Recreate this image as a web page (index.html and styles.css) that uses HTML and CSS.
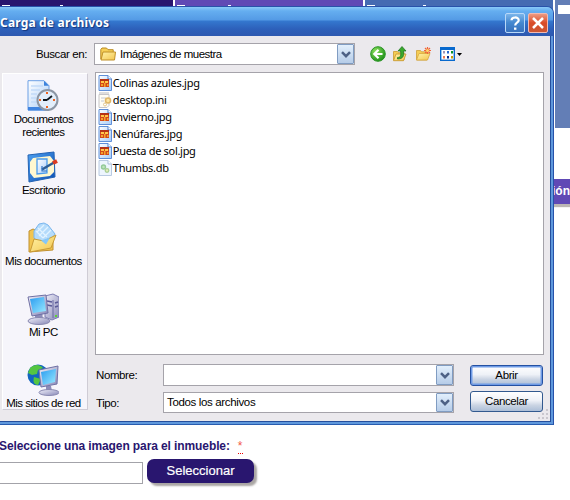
FILE: index.html
```html
<!DOCTYPE html>
<html lang="es">
<head>
<meta charset="utf-8">
<title>Carga de archivos</title>
<link rel="stylesheet" href="styles.css">
</head>
<body>
<svg class="defs" width="0" height="0" aria-hidden="true">
  <defs>
    <linearGradient id="gold" x1="0" y1="0" x2="1" y2="1"><stop offset="0" stop-color="#fff3a8"/><stop offset="1" stop-color="#f3c650"/></linearGradient>
    <linearGradient id="screen" x1="0" y1="0" x2="1" y2="1"><stop offset="0" stop-color="#2a9cf0"/><stop offset="1" stop-color="#9aeaff"/></linearGradient>
    <linearGradient id="paper" x1="0" y1="0" x2="1" y2="1"><stop offset="0" stop-color="#fff"/><stop offset="1" stop-color="#a9cdf8"/></linearGradient>
    <linearGradient id="metal" x1="0" y1="0" x2="1" y2="1"><stop offset="0" stop-color="#f0f0fa"/><stop offset="1" stop-color="#8686b6"/></linearGradient>
    <linearGradient id="blue" x1="0" y1="0" x2="1" y2="1"><stop offset="0" stop-color="#4da0f0"/><stop offset="1" stop-color="#0c4fb4"/></linearGradient>
    <radialGradient id="green" cx=".35" cy=".3" r=".8"><stop offset="0" stop-color="#8be05c"/><stop offset="1" stop-color="#168a14"/></radialGradient>
    <symbol id="image-file" viewBox="0 0 14 16">
      <path d="M1 .5h9l3.500 3.500v11.500H1z" fill="url(#paper)" stroke="#5f8fd8"/>
      <path d="M10 .5V4h3.500" fill="#fff" stroke="#4c7fd0"/>
      <path d="M2 4h9v8H2z" fill="#d2481c"/><path d="M2 4h9v2H2z" fill="#b53216"/><path d="M3 6h3v2H3zM7 6h3v2H7z" fill="#ffc94a"/><path d="M3 9h2v2H3zM6 8h1.500v4H6zM9 9h1.500v2H9z" fill="#f4a52c"/>
    </symbol>
    <symbol id="chevron" viewBox="0 0 10 7"><path d="M1 1.200l4 4 4-4" fill="none" stroke="#4d6185" stroke-width="2.500"/></symbol>
  </defs>
</svg>

<div class="page">
  <nav class="menu">
    <span class="tab navy"><i></i><i></i></span>
    <span class="tab purple"><i></i><i></i></span>
    <span class="tab blue"><i></i><i></i></span>
  </nav>
  <aside class="side">
    <div class="side-panel"><i></i></div>
    <div class="side-title">ión</div>
  </aside>
  <form class="upload">
    <p class="question"><span>Seleccione una imagen para el inmueble:</span><abbr>*</abbr></p>
    <div class="picker"><div class="path"></div><div class="select">Seleccionar</div></div>
  </form>
</div>

<section class="dialog">
  <header class="titlebar">
    <h1>Carga de archivos</h1>
    <span class="caption help"><svg width="18" height="18" viewBox="0 0 18 18"><path d="M5.500 6.300C5.500 2.600 12.700 2.500 12.700 6.200c0 2.600-3.500 2.500-3.500 5.300" fill="none" stroke="#fff" stroke-width="2.200"/><path d="M8 13.500h2.400v2.300H8z" fill="#fff"/></svg></span>
    <span class="caption close"><svg width="18" height="18" viewBox="0 0 18 18"><path d="M4 4l10 10M14 4L4 14" stroke="#fff" stroke-width="2.500"/></svg></span>
  </header>

  <div class="body">
    <div class="lookup">
      <label>Buscar en:</label>
      <div class="combo">
        <svg class="folder" width="16" height="14" viewBox="0 0 16 14"><path d="M.8 12V2.500L2 1h4.500l1.500 1.700h5.200V12z" fill="#f6cf57" stroke="#b98a22"/><path d="M1 13L3 5h12.500L14.500 13z" fill="url(#gold)" stroke="#c09028"/></svg>
        <span>Imágenes de muestra</span>
        <b class="drop"><svg width="10" height="7"><use href="#chevron"/></svg></b>
      </div>
      <div class="tools">
        <svg width="16" height="16" viewBox="0 0 16 16"><circle cx="8" cy="8" r="7.300" fill="url(#green)" stroke="#2a9426"/><path d="M8.500 3.800L4.300 8l4.200 4.200M4.500 8h8" fill="none" stroke="#fff" stroke-width="2.200"/></svg>
        <svg width="16" height="16" viewBox="0 0 16 16"><path d="M1.500 14V5.500h4l1 1.200H12V14z" fill="#f5cd55" stroke="#c99a30" stroke-width=".8"/><path d="M1.500 14.700L4 8h10l-2.500 6.700z" fill="url(#gold)" stroke="#c4932a" stroke-width=".8"/><path d="M5.500 11.500C9 11.500 9 9 8.500 5H6l4-4.500L14 5h-2.500c.8 5-.5 8-6 8z" fill="#39a82d" stroke="#18701a" stroke-width=".7"/></svg>
        <svg width="16" height="16" viewBox="0 0 16 16"><path d="M1.500 14V4.500h4l1 1.300H12V14z" fill="#f5cd55" stroke="#cfa036" stroke-width=".8"/><path d="M1.500 14L4 7.500h11L12.500 14z" fill="url(#gold)" stroke="#d8a840" stroke-width=".8"/><path d="M12.500 1v7M9 4.500h7M10 2l5 5M15 2l-5 5" stroke="#f0653a" stroke-width="1.200"/><circle cx="12.500" cy="4.500" r="1.500" fill="#ffd86a"/></svg>
        <svg width="22" height="16" viewBox="0 0 22 16"><rect x=".7" y="1.700" width="13.600" height="12.600" fill="#fff" stroke="#0869ce" stroke-width="1.400"/><path d="M0 1h15v3H0z" fill="#0869ce"/><path d="M3 5h2v2.500H3z" fill="#a094b8"/><path d="M7 5h2v2.500H7z" fill="#2868d0"/><path d="M11 5h2v2.500h-2z" fill="#08902c"/><path d="M3 10h2v2.500H3z" fill="#f07850"/><path d="M7 10h2v2.500H7z" fill="#082888"/><path d="M11 10h2v2.500h-2z" fill="#c89c08"/><path d="M17 7h5l-2.500 3z" fill="#000"/></svg>
      </div>
    </div>

    <div class="content">
      <div class="places">
        <div class="place">
          <svg width="32" height="32" viewBox="0 0 32 32"><path d="M1 .7h16l5 5V30H1z" fill="url(#paper)" stroke="#6c9fe4"/><path d="M17 .7v5h5z" fill="#3d83dc"/><path d="M4 6h12M4 10h9M4 14h6M4 18h5M4 22h6" stroke="#c2daf8" stroke-width="1.500"/><path d="M1 27h21v3.500H1z" fill="#3f84e0"/><circle cx="20.500" cy="20" r="10" fill="#e3eefa" stroke="#8c96a4" stroke-width="2"/><path d="M20 20l5-4M20 20h-4" stroke="#101820" stroke-width="1.800"/><path d="M20 12v2M20 26v2M12 20h2M26 20h2" stroke="#f06420" stroke-width="2"/></svg>
          <span>Documentos<br>recientes</span>
        </div>
        <div class="place">
          <svg width="32" height="32" viewBox="0 0 32 32"><path d="M1 4L27 1l1 25-26 5z" fill="url(#blue)" stroke="#2363b4"/><path d="M6 7l17-2 4 5v11l-4 4-16 2-4-5V11z" fill="#fff8d0"/><path d="M10 8h10v14l-10 1z" fill="url(#paper)" stroke="#4a9bec" stroke-width="1.300"/><path d="M15 18.500l12-7" stroke="#2d5d94" stroke-width="2.500"/><path d="M15 15v5h5" fill="none" stroke="#2d72c4" stroke-width="1.200"/><path d="M26 12l4-2" stroke="#dc3a20" stroke-width="4"/></svg>
          <span>Escritorio</span>
        </div>
        <div class="place">
          <svg width="32" height="32" viewBox="0 0 32 32"><path d="M2 30V9l4-2 5 2v5l15-1v15z" fill="#f2c550" stroke="#c09030"/><path d="M7 9L12 2l5-1 4 2 7 9-9 14L7 16z" fill="#b4dbfb" stroke="#7ab6ee"/><path d="M10 10l7-7M12 14l9-9M16 16l8-8M11 6l9 9M9 9l7 7" stroke="#e2f3ff" stroke-width="1.200"/><path d="M3 30l4-13 10 2 12-6-5 13z" fill="url(#gold)" stroke="#c99b35"/><path d="M14 18.500l9-3-4 7z" fill="#84c7f8"/></svg>
          <span>Mis documentos</span>
        </div>
        <div class="place">
          <svg width="32" height="32" viewBox="0 0 32 32"><path d="M18 3l8-2 6 3v20l-7 3-7-3z" fill="url(#metal)" stroke="#7d7db2"/><path d="M26 7v18" stroke="#6868a2"/><path d="M20 8l5 1M20 12l5 1M28 10l3-1M28 14l3-1" stroke="#5a5a98" stroke-width="1.500"/><path d="M28 22h2v2h-2z" fill="#5bd430"/><path d="M8 19h7l1 7H8z" fill="#8c8cb8"/><ellipse cx="12" cy="28" rx="11" ry="3.500" fill="url(#metal)" stroke="#8888b0"/><path d="M1 4l18-2 2 18-16 3z" fill="url(#metal)" stroke="#7070a4"/><path d="M3 6l14-2 2 14-13 2z" fill="url(#screen)"/></svg>
          <span>Mi PC</span>
        </div>
        <div class="place">
          <svg width="32" height="32" viewBox="0 0 32 32"><circle cx="11" cy="11" r="10.500" fill="#1265c0"/><path d="M3 4c5-5 11-3 13 0l-5 2-1 4-5 1-4-2zM7 13l7 2-3 6c-5-1-5-4-4-8z" fill="#54c541"/><path d="M19 22h5l1 5h-6z" fill="#8c8cb8"/><ellipse cx="22" cy="28.500" rx="10" ry="3" fill="url(#metal)" stroke="#8888b0"/><path d="M12 6l19-4-1 18-16 3z" fill="url(#metal)" stroke="#7070a4"/><path d="M14 8l15-3-1 13-12 3z" fill="url(#screen)"/></svg>
          <span>Mis sitios de red</span>
        </div>
      </div>

      <div class="files">
        <div class="file"><svg width="14" height="16"><use href="#image-file"/></svg><span>Colinas azules.jpg</span></div>
        <div class="file"><svg width="14" height="16" viewBox="0 0 14 16"><path d="M1 2.500h10v11L9 15.500H1z" fill="#fffdf4" stroke="#c6c5c8"/><path d="M2 2V0M4 2V0M6 2V0M8 2V0M10 2V0" stroke="#bbb"/><path d="M3 6h5M3 9h3" stroke="#c2c8d4"/><circle cx="10" cy="8.500" r="2.500" fill="#ffe6a0" stroke="#dfb769" stroke-width="1.600"/><circle cx="7" cy="12.500" r="1.500" fill="#fff" stroke="#e2c68c"/></svg><span>desktop.ini</span></div>
        <div class="file"><svg width="14" height="16"><use href="#image-file"/></svg><span>Invierno.jpg</span></div>
        <div class="file"><svg width="14" height="16"><use href="#image-file"/></svg><span>Nenúfares.jpg</span></div>
        <div class="file"><svg width="14" height="16"><use href="#image-file"/></svg><span>Puesta de sol.jpg</span></div>
        <div class="file"><svg width="14" height="16" viewBox="0 0 14 16"><path d="M1 .5h9l3.500 3.500v11.500H1z" fill="#edf5fd" stroke="#b9cae2"/><path d="M10 .5V4h3.500" fill="#fff" stroke="#a9bddb"/><circle cx="5.500" cy="7" r="2" fill="#bfe4bd" stroke="#93c998" stroke-width="1.400"/><circle cx="9" cy="10.500" r="1.800" fill="#e5edb6" stroke="#a9cf96" stroke-width="1.300"/></svg><span>Thumbs.db</span></div>
      </div>
    </div>

    <div class="fields">
      <label>Nombre:</label>
      <div class="combo"><span></span><b class="drop"><svg width="10" height="7"><use href="#chevron"/></svg></b></div>
      <div class="button primary"><span>Abrir</span></div>
      <label>Tipo:</label>
      <div class="combo short"><span class="type">Todos los archivos</span><b class="drop"><svg width="10" height="7"><use href="#chevron"/></svg></b></div>
      <div class="button cancel"><span>Cancelar</span></div>
    </div>
    <svg class="grip" width="12" height="12" viewBox="0 0 12 12"><path d="M9 1h2v2H9zM5 5h2v2H5zM9 5h2v2H9zM1 9h2v2H1zM5 9h2v2H5zM9 9h2v2H9z" fill="#c9c7ce"/></svg>
  </div>
</section>
</body>
</html>
```
FILE: styles.css
```css
* { box-sizing: border-box; }
body {
  margin: 0;
  width: 570px;
  height: 500px;
  overflow: hidden;
  position: relative;
  background: #fff;
  color: #000;
  font: 11.5px/13px "Liberation Sans", Arial, sans-serif;
  letter-spacing: -.5px;
}
.defs { position: absolute; }
svg { display: block; flex: none; }

/* Page behind the dialog */
.page { height: 500px; display: grid; grid-template: 436px 1fr / 555px 15px; }
.menu { display: flex; gap: 2px; height: 36px; }
.tab { width: 188px; padding: 5px 0 0 2px; display: flex; gap: 43px; }
.tab i { width: 8px; height: 1px; background: #fff; }
.tab i + i { width: 3px; }
.navy { width: 173px; background: #29166f; gap: 50px; }
.purple { background: #6049b5; }
.blue { background: #456bb2; gap: 48px; }
.side-panel { height: 128px; background: #637eb6; padding: 5px 0 0 3px; }
.side-panel i { display: block; height: 9px; background: #fff; }
.side-title {
  height: 25px;
  margin: 51px 0 0 -3px;
  background: #6049b5;
  box-shadow: 0 3px 1px #bbb6b3;
  color: #fff;
  font: bold 12px/25px "Liberation Sans", Arial, sans-serif;
  letter-spacing: 0;
  white-space: nowrap;
}
.upload { grid-column: 1 / 3; color: #29166f; }
.question { margin: 3px 0 0 -1px; display: flex; height: 20px; font: bold 12px/14px "Liberation Sans", Arial, sans-serif; letter-spacing: -.1px; white-space: nowrap; }
.question abbr { margin-left: 8px; width: 5px; height: 15px; border-bottom: 1px dotted #e00; color: #f25a4a; font-weight: normal; text-decoration: none; }
.picker { display: flex; gap: 4px; align-items: flex-start; }
.path { width: 144px; height: 22px; margin: 3px 0 0 -1px; border: 1px solid #a3a3a9; border-width: 1px 1px 1px 0; }
.select {
  width: 107px;
  height: 24px;
  border-radius: 7px;
  background: #29166f;
  box-shadow: 3px 3px 2px #aaa6a4;
  color: #fff;
  text-align: center;
  font: 13px/23px "Liberation Sans", Arial, sans-serif;
  letter-spacing: 0;
  -webkit-text-stroke: .2px #fff;
}

/* Dialog window */
.dialog {
  position: absolute;
  left: -4px;
  top: 6px;
  width: 558px;
  height: 419px;
  display: flex;
  flex-direction: column;
  background: #5f98dc;
  border: 1px solid #2852aa;
  border-bottom-color: #285cb0;
  border-radius: 0 7px 0 0;
  padding: 0 2px 2px 3px;
}
.titlebar {
  height: 29px;
  margin: 0 -2px 0 -3px;
  padding: 2px 5px 0 3px;
  display: flex;
  align-items: center;
  border-radius: 0 6px 0 0;
  background: linear-gradient(#8bc9f8 0, #65aef0 4px, #549ae5 13px, #3478cf 14px, #2d60ba 22px, #2e59b0 29px);
}
.titlebar h1 { flex: 1; margin: 0; font: bold 12px/16px "Noto Sans", sans-serif; color: #fff; text-shadow: 1px 1px 1px #12357c; letter-spacing: .18px; }
.caption { width: 20px; height: 20px; margin-left: 4px; border: 1px solid #b8d8f8; border-radius: 2px; background: linear-gradient(#7bb5ea, #4487cf 50%, #3971bd); }
.caption.close { margin-left: 3px; background: linear-gradient(#ed9a82, #d94b28 50%, #cb5735); border-color: #f2b9b0; }
.body { flex: 1; position: relative; background: #ebe9ed; border: solid #254f9d; border-width: 0 1px 1px 0; padding: 7px 6px 0 2px; }
.lookup { display: flex; height: 22px; align-items: center; }
.lookup label { width: 92px; padding-left: 34px; letter-spacing: -.4px; }
.combo { height: 22px; display: flex; align-items: center; background: #fff; border: 1px solid #a5a3aa; }
.combo > span { flex: 1; padding-left: 4px; }
.combo .type { padding-left: 3px; letter-spacing: -.35px; }
.lookup .combo { width: 261px; padding-left: 5px; }
.drop { width: 17px; height: 100%; display: grid; place-content: center; background: linear-gradient(#e2effc, #b6cce8); border: 1px solid #809cc2; border-radius: 1px; }
.tools { display: flex; gap: 7px; margin-left: 15px; }
.tools svg + svg { margin-left: -1px; }
.tools svg + svg + svg { margin-left: 0; }
.tools svg:last-child { margin-left: 2px; }
.content { display: flex; gap: 7px; margin-top: 7px; }
.places { width: 86px; height: 337px; margin: 1px 0 -1px; padding: 6px 3px 0 0; background: #f6f5fb; border: 1px solid #fff; border-right-color: #cfccd5; border-bottom-color: #cfccd5; }
.place { height: 71px; display: flex; flex-direction: column; align-items: center; text-align: center; }
.place svg { margin-bottom: 1px; }
.place span { white-space: nowrap; }
.files { width: 450px; height: 283px; border: 1px solid #a5a3aa; background: #fff; padding: 1px 2px; }
.file { height: 17px; display: flex; gap: 1px; align-items: center; font: 11px/16px "Noto Sans", sans-serif; letter-spacing: -.3px; white-space: nowrap; }
.fields { display: grid; grid-template-columns: 67px 291px 73px; grid-template-rows: 22px 21px; row-gap: 6px; margin: -45px 0 0 94px; align-items: start; }
.fields label { letter-spacing: -.4px; line-height: 23px; }
.fields .short { height: 21px; }
.fields .short + .button { margin-top: -1px; }
.fields label + .short { margin-top: 0; }
.button { width: 73px; height: 21px; margin: 1px 0 0 16px; border: 1px solid #32598f; border-radius: 3px; background: linear-gradient(#fff, #eef1f7 45%, #cad4e3 70%, #acbed7); text-align: center; line-height: 19px; letter-spacing: -.4px; }
.button.primary { border-color: #2551a2; box-shadow: inset 0 0 0 1.500px #6f9be6; }
.grip { position: absolute; right: 1px; bottom: 1px; }
```
